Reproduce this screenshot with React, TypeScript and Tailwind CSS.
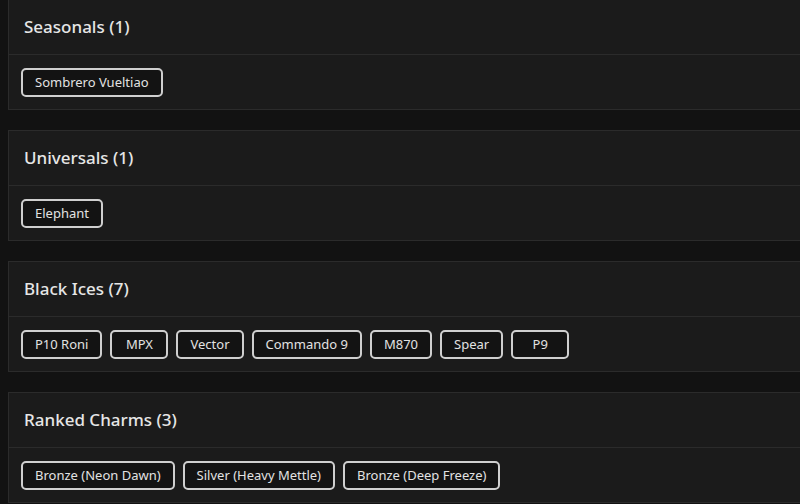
import React from 'react';

interface Section {
  title: string;
  items: string[];
}

const SECTIONS: Section[] = [
  { title: 'Seasonals', items: ['Sombrero Vueltiao'] },
  { title: 'Universals', items: ['Elephant'] },
  { title: 'Black Ices', items: ['P10 Roni', 'MPX', 'Vector', 'Commando 9', 'M870', 'Spear', 'P9'] },
  { title: 'Ranked Charms', items: ['Bronze (Neon Dawn)', 'Silver (Heavy Mettle)', 'Bronze (Deep Freeze)'] },
];

const Chip: React.FC<{ label: string }> = ({ label }) => (
  <span className="inline-flex h-[29px] min-w-[58px] items-center justify-center rounded-[5px] border-2 border-[#cfcfcf] bg-[#131313] px-[12px] text-[13px] text-[#e2e2e2]">
    {label}
  </span>
);

const SectionCard: React.FC<{ section: Section }> = ({ section }) => (
  <div className="mb-[20px] ml-[8px] border border-r-0 border-[#2b2b2b] bg-[#1b1b1b]">
    {/* header */}
    <div className="flex h-[55px] items-center border-b border-[#2b2b2b] px-[15px]">
      <h2 className="text-[17px] font-medium text-[#e6e6e6]">
        {section.title} ({section.items.length})
      </h2>
    </div>
    {/* chips */}
    <div className="flex flex-wrap gap-[8px] px-[12px] pt-[13px] pb-[12px]">
      {section.items.map((item) => (
        <Chip key={item} label={item} />
      ))}
    </div>
  </div>
);

export default function App() {
  return (
    <div
      className="h-[504px] w-[800px] overflow-hidden bg-[#121212]"
      style={{ fontFamily: '"Noto Sans", sans-serif' }}
    >
      <div className="-mt-px">
        {SECTIONS.map((s) => (
          <SectionCard key={s.title} section={s} />
        ))}
      </div>
    </div>
  );
}
